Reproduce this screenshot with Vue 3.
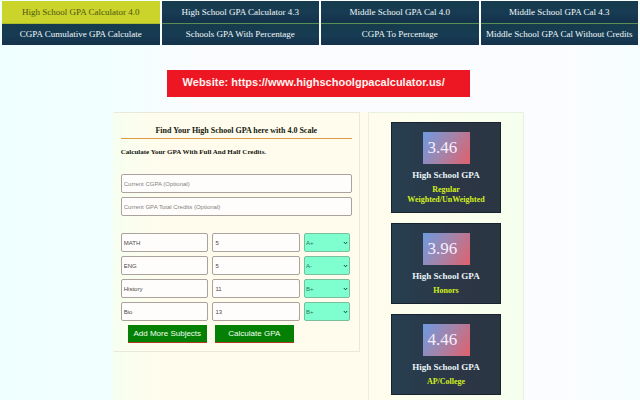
<script setup>
import { ref } from 'vue'

const links = [
  'High School GPA Calculator 4.0',
  'High School GPA Calculator 4.3',
  'Middle School GPA Cal 4.0',
  'Middle School GPA Cal 4.3',
  'CGPA Cumulative GPA Calculate',
  'Schools GPA With Percentage',
  'CGPA To Percentage',
  'Middle School GPA Cal Without Credits',
]
const active = ref(0)

const grades = ['A+', 'A', 'A-', 'B+', 'B', 'B-', 'C+', 'C', 'C-', 'D+', 'D', 'F']
const subjects = ref([
  { name: 'MATH', credits: '5', grade: 'A+' },
  { name: 'ENG', credits: '5', grade: 'A-' },
  { name: 'History', credits: '11', grade: 'B+' },
  { name: 'Bio', credits: '13', grade: 'B+' },
])
const cgpa = ref('')
const totalCredits = ref('')

const results = [
  { score: '3.46', kind: 'Regular Weighted/UnWeighted' },
  { score: '3.96', kind: 'Honors' },
  { score: '4.46', kind: 'AP/College' },
]

function addSubject() {
  subjects.value.push({ name: '', credits: '', grade: 'A+' })
}
</script>

<template>
  <div class="page">
    <nav class="nav">
      <a
        v-for="(link, i) in links"
        :key="link"
        href="#"
        :class="{ active: i === active }"
        @click.prevent="active = i"
      >{{ link }}</a>
    </nav>

    <div class="body">
      <a class="banner" href="https://www.highschoolgpacalculator.us/">Website: https://www.highschoolgpacalculator.us/</a>

      <main class="content">
        <form class="calculator" @submit.prevent>
          <h1>Find Your High School GPA here with 4.0 Scale</h1>
          <h2>Calculate Your GPA With Full And Half Credits.</h2>
          <div class="current">
            <input v-model="cgpa" type="text" placeholder="Current CGPA (Optional)" aria-label="Current CGPA (Optional)">
            <input v-model="totalCredits" type="text" placeholder="Current GPA Total Credits (Optional)" aria-label="Current GPA Total Credits (Optional)">
          </div>
          <div class="subjects">
            <div v-for="(subject, i) in subjects" :key="i" class="subject">
              <input v-model="subject.name" type="text" aria-label="Subject">
              <input v-model="subject.credits" type="text" aria-label="Credits">
              <div class="grade">
                <select v-model="subject.grade" aria-label="Grade">
                  <option v-for="grade in grades" :key="grade">{{ grade }}</option>
                </select>
                <svg viewBox="0 0 6 4" aria-hidden="true"><path d="M1 .8 3 3 5 .8" /></svg>
              </div>
            </div>
          </div>
          <div class="actions">
            <button type="button" @click="addSubject">Add More Subjects</button>
            <button type="submit">Calculate GPA</button>
          </div>
        </form>

        <aside class="results">
          <section v-for="result in results" :key="result.score" class="card">
            <div class="score">{{ result.score }}</div>
            <h3>High School GPA</h3>
            <p>{{ result.kind }}</p>
          </section>
        </aside>
      </main>
    </div>
  </div>
</template>

<style>
body {
  background: #f7feff;
}
</style>

<style scoped>
* {
  box-sizing: border-box;
}

.page {
  min-height: 100vh;
  padding: 1px 2px 0;
  font-family: "Liberation Serif", "Times New Roman", serif;
  background: linear-gradient(90deg, #efffff 0%, #f3ffff 20%, #fbfcff 32%, #fbfcff 88%, #f6feff 100%);
}

.nav {
  display: grid;
  grid-template-columns: repeat(4, minmax(0, 1fr));
  gap: 0 2px;
}

.nav a {
  height: 21px;
  font-size: 9px;
  line-height: 21px;
  text-align: center;
  white-space: nowrap;
  color: #f2f8fa;
  text-decoration: none;
  background: linear-gradient(#153b4c, #173c53 50%, #14324b);
}

.nav a:nth-child(-n + 4) {
  height: 23px;
  line-height: 23px;
  border-bottom: 1px solid #579052;
}

.nav a.active {
  color: #4c5413;
  background: #cbd42a;
  border-bottom-color: #aebd2b;
}

.body {
  padding-right: 3px;
}

.banner {
  display: block;
  width: 48%;
  height: 27px;
  margin: 25px auto 0;
  padding-left: 16px;
  font: bold 11px/25px "Liberation Sans", Arial, sans-serif;
  white-space: nowrap;
  color: #fff3ee;
  text-decoration: none;
  background: #ed1724;
}

.content {
  display: grid;
  grid-template-columns: 248fr 157fr;
  align-items: start;
  gap: 8px;
  width: 65%;
  margin: 15px auto 0;
  background: linear-gradient(90deg, #f7fff0 0%, #fffced 12%, #fffced 62%, #fcffed 75%, #f6ffee 100%);
}

.calculator {
  padding: 12px 7px 8px;
  border: 1px solid #e8e9d8;
  border-left-color: #f4fff0;
}

h1,
h2,
h3,
p {
  margin: 0;
}

h1 {
  height: 14px;
  font-size: 8px;
  line-height: 11px;
  text-align: center;
  color: #15200f;
  border-bottom: 1px solid #e29a45;
}

h2 {
  margin-top: 8px;
  font-size: 7px;
  line-height: 11px;
  color: #15150f;
}

.current {
  display: grid;
  gap: 4px;
  margin-top: 16px;
}

input,
select {
  width: 100%;
  height: 19px;
  margin: 0;
  padding: 0 2px;
  font: 6px "Liberation Sans", Arial, sans-serif;
  color: #4c4747;
  background: #fffdfb;
  border: 1px solid #a9a29d;
  border-radius: 2px;
}

input::placeholder {
  color: #857f7c;
}

.subjects {
  display: grid;
  gap: 4px;
  margin-top: 17px;
}

.subject {
  display: grid;
  grid-template-columns: 88fr 88fr 46fr;
  gap: 4px;
  padding-right: 2px;
}

.grade {
  position: relative;
}

.grade select {
  display: block;
  padding: 0 1px;
  appearance: none;
  color: #2e7760;
  background: #7fffcf;
  border-color: #78bf9e;
}

.grade svg {
  position: absolute;
  top: 8px;
  right: 2px;
  width: 5px;
  height: 4px;
  fill: none;
  stroke: #174a38;
  stroke-width: 1.2;
  pointer-events: none;
}

.actions {
  display: grid;
  grid-template-columns: 79px 79px;
  gap: 8px;
  margin: 4px 0 0 7px;
}

button {
  height: 18px;
  padding: 0;
  font: 8px "Liberation Sans", Arial, sans-serif;
  white-space: nowrap;
  color: #f2fff0;
  background: #048104;
  border: 0;
  border-bottom: 1px solid #b03a20;
}

.results {
  display: grid;
  gap: 10px;
  padding: 9px 22px 5px;
  border: 1px solid #eaf0df;
  border-bottom: 0;
}

.card {
  padding: 9px 12px 7px;
  text-align: center;
  background: linear-gradient(90deg, #263f50, #2c3646 60%, #2b3643);
  border: 1px solid #17242f;
}

.score {
  width: 47px;
  height: 32px;
  margin: 0 auto;
  padding-left: 5px;
  font-size: 17px;
  line-height: 32px;
  text-align: left;
  color: #f3efff;
  background: linear-gradient(120deg, #6e9ae0, #a583a8 50%, #e1606c);
}

h3 {
  margin-top: 6px;
  font-size: 9px;
  line-height: 10px;
  white-space: nowrap;
  color: #e9f4f8;
}

p {
  margin-top: 5px;
  font-size: 8px;
  line-height: 10px;
  font-weight: bold;
  color: #d3f01b;
}
</style>
